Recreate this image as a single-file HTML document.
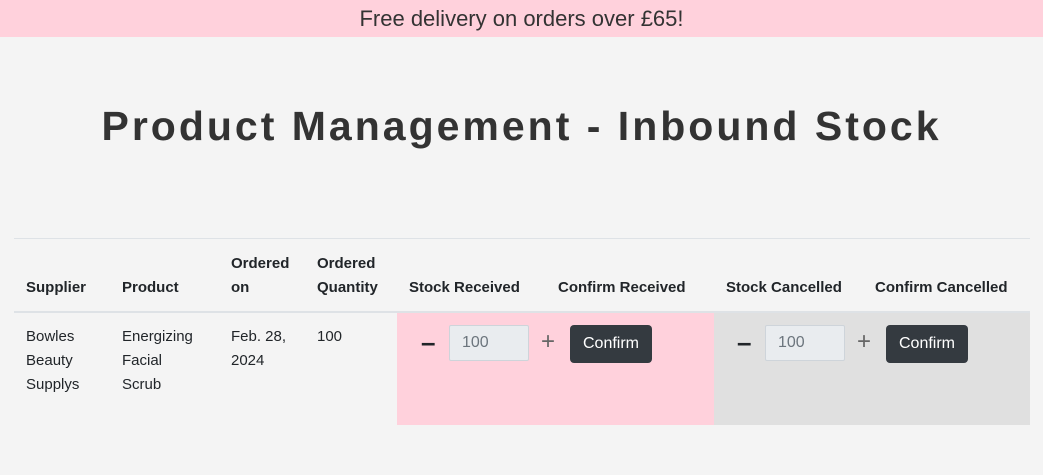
<!DOCTYPE html>
<html><head><style>
body{margin:0;width:1043px;height:475px;background:#f4f4f4;font-family:"Liberation Sans",sans-serif;color:#212529;position:relative;overflow:hidden}
.ban{position:absolute;left:0;top:0;width:1043px;height:37px;background:#ffd1dc;text-align:center;font-size:22px;line-height:37px;color:#333}
h1{position:absolute;left:0;top:100px;width:1043px;margin:0;text-align:center;font-size:41px;font-weight:900;color:#333;letter-spacing:3px;line-height:52px}
.a{position:absolute;font-size:15px;line-height:24px}
.b{font-weight:bold}
.line{position:absolute;left:14px;width:1016px;background:#dee2e6}
.cell{position:absolute;top:313px;height:112px}
.inp{position:absolute;width:80px;height:36px;background:#e9ecef;border:1px solid #ced4da;box-sizing:border-box;border-radius:2px;color:#6c757d;font-size:16px;line-height:34px;padding-left:12px}
.btn{position:absolute;width:82px;height:38px;background:#343a40;color:#fff;border-radius:4px;font-size:16px;line-height:37px;text-align:center}
.mi{position:absolute;font-size:26px;font-weight:bold;line-height:36px}
.pl{position:absolute;font-size:24px;color:#666;line-height:36px}
</style></head><body>
<div class="ban">Free delivery on orders over £65!</div>
<h1>Product Management - Inbound Stock</h1>
<div class="line" style="top:238px;height:1px"></div>
<div class="cell" style="left:397px;width:317px;background:#ffd1dc"></div>
<div class="cell" style="left:714px;width:316px;background:#e0e0e0"></div>
<div class="line" style="top:311px;height:2px"></div>
<div class="a b" style="left:26px;top:276px">Supplier</div>
<div class="a b" style="left:122px;top:276px">Product</div>
<div class="a b" style="left:231px;top:252px">Ordered<br>on</div>
<div class="a b" style="left:317px;top:252px">Ordered<br>Quantity</div>
<div class="a b" style="left:409px;top:276px">Stock Received</div>
<div class="a b" style="left:558px;top:276px">Confirm Received</div>
<div class="a b" style="left:726px;top:276px">Stock Cancelled</div>
<div class="a b" style="left:875px;top:276px">Confirm Cancelled</div>
<div class="a" style="left:26px;top:325px">Bowles<br>Beauty<br>Supplys</div>
<div class="a" style="left:122px;top:325px">Energizing<br>Facial<br>Scrub</div>
<div class="a" style="left:231px;top:325px">Feb. 28,<br>2024</div>
<div class="a" style="left:317px;top:325px">100</div>
<div class="mi" style="left:421px;top:324px">–</div>
<div class="inp" style="left:449px;top:325px">100</div>
<div class="pl" style="left:541px;top:324px">+</div>
<div class="btn" style="left:570px;top:325px">Confirm</div>
<div class="mi" style="left:737px;top:324px">–</div>
<div class="inp" style="left:765px;top:325px">100</div>
<div class="pl" style="left:857px;top:324px">+</div>
<div class="btn" style="left:886px;top:325px">Confirm</div>
</body></html>
